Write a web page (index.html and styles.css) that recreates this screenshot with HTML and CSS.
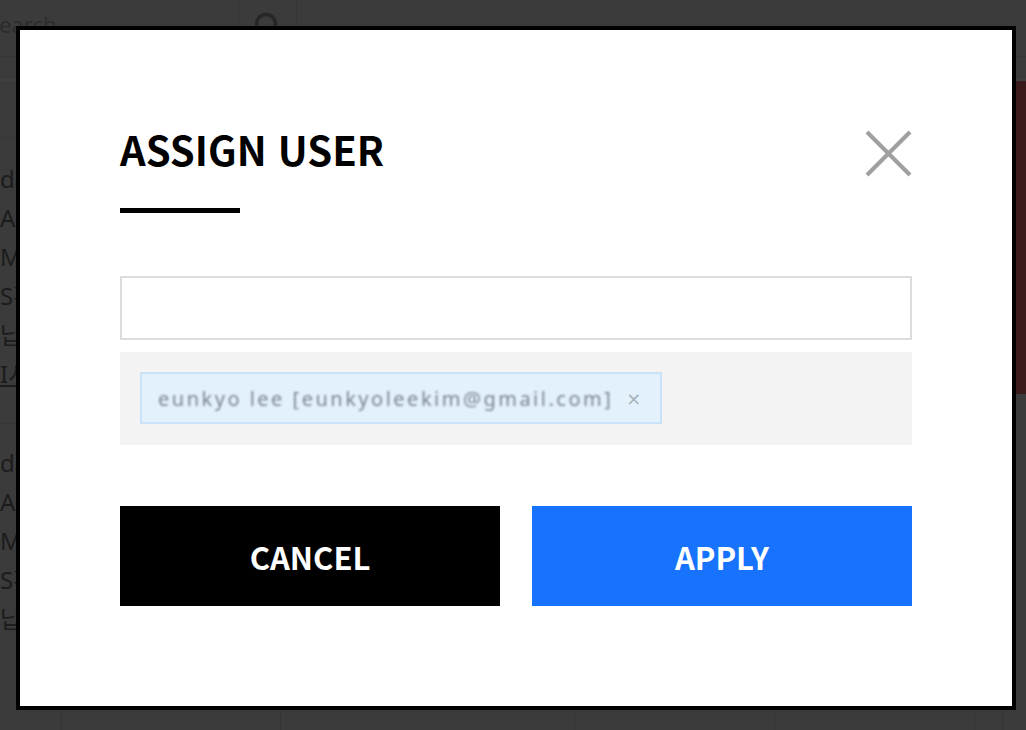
FILE: index.html
```html
<!DOCTYPE html>
<html lang="ko">
<head>
<meta charset="utf-8">
<title>Assign User</title>
<link rel="stylesheet" href="styles.css">
</head>
<body>
<div class="page">
  <div class="topbar">
    <div class="search-field"><span class="search-ph">Search</span></div>
    <div class="search-btn">
      <svg width="26" height="26" viewBox="0 0 26 26"><circle cx="12" cy="12" r="9.5" fill="none" stroke="#262626" stroke-width="3.5"/></svg>
    </div>
    <div class="topbar-rest"></div>
  </div>
  <div class="subbar"></div>
  <div class="content">
    <div class="list">
      <div class="group">
        <div class="row">dashboard</div>
        <div class="row">Assignee</div>
        <div class="row">Manager</div>
        <div class="row">S확인</div>
        <div class="row">납기</div>
        <div class="row link">I시작</div>
      </div>
      <div class="group">
        <div class="row">dashboard</div>
        <div class="row">Assignee</div>
        <div class="row">Manager</div>
        <div class="row">S확인</div>
        <div class="row">납기</div>
      </div>
    </div>
    <div class="side">
      <div class="side-red"></div>
    </div>
  </div>
  <div class="footer">
    <span class="col c1"></span><span class="col c2"></span><span class="col c3"></span><span class="col c4"></span><span class="col c5"></span><span class="col c6"></span>
  </div>
</div>

<div class="modal">
  <div class="modal-head">
    <h2 class="modal-title">ASSIGN USER</h2>
    <button class="close" aria-label="close">
      <svg width="47" height="47" viewBox="0 0 47 47"><path d="M2 2 L45 45 M45 2 L2 45" stroke="#a0a0a0" stroke-width="4.2" fill="none"/></svg>
    </button>
  </div>
  <div class="title-bar"></div>
  <input class="user-input" type="text">
  <div class="tags">
    <span class="tag"><span class="tag-text">eunkyo lee [eunkyoleekim@gmail.com]</span><span class="tag-x">×</span></span>
  </div>
  <div class="actions">
    <button class="btn cancel">CANCEL</button>
    <button class="btn apply">APPLY</button>
  </div>
</div>
</body>
</html>
```
FILE: styles.css
```css
* { box-sizing: border-box; }
html, body { margin: 0; padding: 0; }
body {
  width: 1026px;
  height: 730px;
  overflow: hidden;
  background: #3b3b3b;
  font-family: "Noto Sans CJK KR", "Noto Sans", sans-serif;
  position: relative;
}
.page {
  width: 1026px;
  height: 730px;
  display: flex;
  flex-direction: column;
  background: #3b3b3b;
}
.topbar {
  height: 57px;
  display: flex;
  border-bottom: 1px solid #363636;
}
.search-field {
  width: 239px;
  padding: 9px 0 0 0;
  overflow: hidden;
  font-family: "Noto Sans", sans-serif;
  font-size: 22px;
  color: #2c2c2c;
  border-right: 1px solid #353535;
}
.search-ph {
  display: inline-block;
  margin-left: -13px;
}
.search-btn {
  width: 58px;
  padding: 12px 0 0 15px;
  border-right: 1px solid #353535;
}
.topbar-rest { flex: 1; }
.subbar {
  height: 24px;
  border-bottom: 2px solid #404040;
}
.content {
  flex: 1;
  display: flex;
}
.list { flex: 1; padding-top: 56px; }
.group {
  padding: 21px 0 0 0;
  border-top: 1px solid #363636;
}
.group + .group { margin-top: 30px; padding-top: 19px; }
.row {
  font-family: "Noto Sans", "Noto Sans CJK KR", sans-serif;
  font-size: 24px;
  line-height: 39px;
  color: #1c1c1c;
}
.row.link { text-decoration: underline; }
.side {
  width: 10px;
}
.side-red {
  height: 313px;
  background: #3b1a1c;
}
.footer {
  height: 20px;
  display: flex;
}
.col { border-right: 1px solid #343434; height: 20px; }
.c1 { width: 62px; }
.c2 { width: 219px; }
.c3 { width: 294px; }
.c4 { width: 200px; }
.c5 { width: 200px; }
.c6 { width: 28px; }

/* modal */
.modal {
  position: absolute;
  left: 16px;
  top: 26px;
  width: 1000px;
  height: 684px;
  border: 4px solid #000;
  background: #fff;
  padding: 100px 100px 0 100px;
  display: flex;
  flex-direction: column;
}
.modal-head {
  height: 48px;
  display: flex;
  justify-content: space-between;
  align-items: flex-start;
}
.modal-title {
  margin: -3px 0 0 0;
  font-family: "Noto Sans CJK KR", sans-serif;
  font-weight: 700;
  font-size: 40px;
  line-height: 44px;
  color: #000;
}
.close {
  width: 47px;
  height: 47px;
  padding: 0;
  border: 0;
  background: none;
  display: block;
}
.close svg { display: block; }
.title-bar {
  margin-top: 30px;
  width: 120px;
  height: 5px;
  background: #000;
}
.user-input {
  margin-top: 63px;
  height: 64px;
  width: 100%;
  border: 2px solid #dcdcdc;
  background: #fff;
  outline: none;
}
.tags {
  margin-top: 12px;
  height: 93px;
  background: #f3f3f3;
  padding: 20px 20px 0 20px;
  display: flex;
  align-items: flex-start;
}
.tag {
  height: 52px;
  width: 522px;
  background: #e3f1fd;
  border: 2px solid #c9e2f8;
  display: flex;
  align-items: center;
  padding: 0 0 0 16px;
}
.tag-text {
  font-family: "Noto Sans", sans-serif;
  font-size: 20px;
  color: #7d8690;
  letter-spacing: 2.5px;
  white-space: nowrap;
  filter: blur(1.2px);
}
.tag-x {
  margin-left: 13px;
  font-family: "DejaVu Sans", sans-serif;
  font-size: 18px;
  color: #a9b1b8;
}
.actions {
  margin-top: 61px;
  display: flex;
  gap: 32px;
}
.btn {
  flex: 1;
  height: 100px;
  border: 0;
  font-family: "Noto Sans CJK KR", sans-serif;
  font-weight: 700;
  font-size: 31px;
  color: #fff;
  padding: 0;
  margin: 0;
}
.cancel { background: #000; }
.apply { background: #1773fd; }
```
